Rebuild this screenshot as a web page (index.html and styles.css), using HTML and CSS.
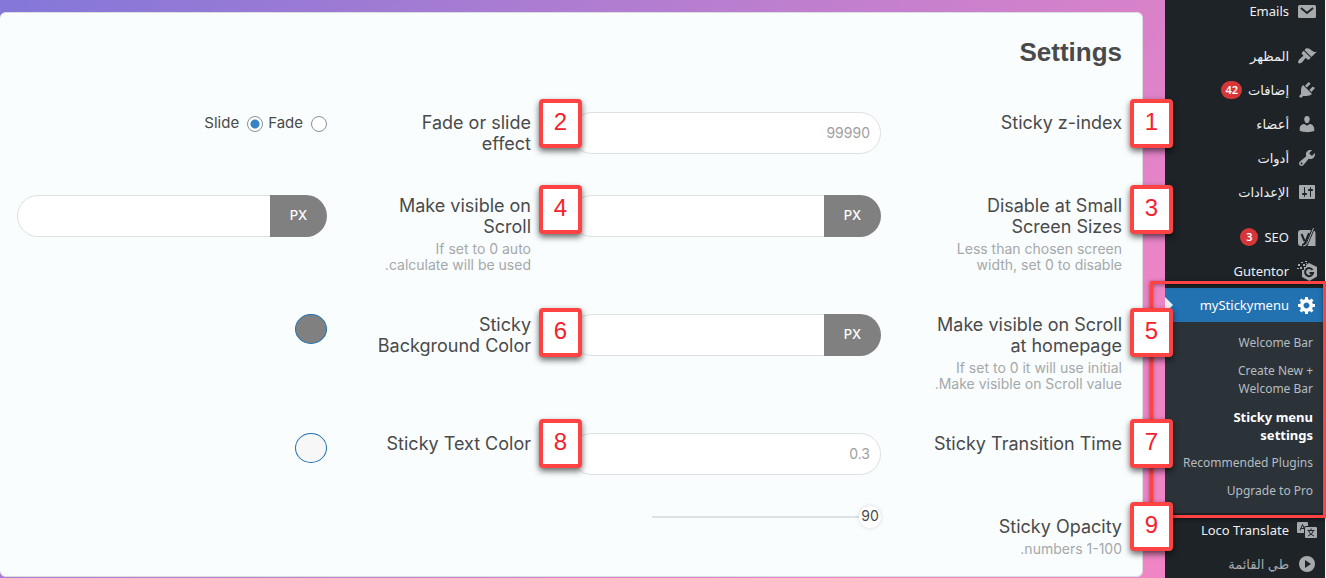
FILE: index.html
```
<!DOCTYPE html>
<html lang="ar" dir="rtl">
<head>
  <meta charset="UTF-8" />
  <title>myStickymenu</title>
  <link rel="stylesheet" href="styles.css">
</head>
<body>

<div class="page">

  <nav class="sidebar">
    <ul class="menu">
      <li>
        <a class="menu-link" href="#">
          <svg class="icon" viewBox="0 0 20 20"><rect x="1" y="4" width="18" height="13" rx="1.5"/><path class="cut" d="M4 7l6 5 6-5"/></svg>
          Emails
        </a>
      </li>
      <li class="separator"></li>
      <li>
        <a class="menu-link" href="#">
          <svg class="icon" viewBox="0 0 20 20"><path d="M14.48 11.06L7.41 3.99l1.5-1.5c.5-.56 2.3-.47 3.51.32 1.21.8 1.43 1.28 2.91 2.1 1.18.64 2.45 1.26 4.45.85zm-.71.71L6.7 4.7 4.93 6.47c-.39.39-.39 1.02 0 1.41l1.06 1.06c.39.39.39 1.03 0 1.42-.6.6-1.43 1.11-2.21 1.69-.35.26-.7.53-1.01.84C1.43 14.23.4 16.08 1.4 17.07c.99 1 2.84-.03 4.18-1.36.31-.31.58-.66.85-1.02.57-.78 1.08-1.61 1.69-2.21.39-.39 1.02-.39 1.41 0l1.06 1.06c.39.39 1.02.39 1.41 0z"/></svg>
          المظهر
        </a>
      </li>
      <li>
        <a class="menu-link" href="#">
          <svg class="icon" viewBox="0 0 20 20"><path d="M13.11 4.36L9.87 7.6 8 5.73l3.24-3.24c.35-.34 1.05-.2 1.56.32.52.51.66 1.21.31 1.55zm-8 1.77l.91-1.12 9.01 9.01-1.19.84c-.71.71-2.63 1.16-3.82 1.16H6.14L4.9 17.26c-.59.59-1.54.59-2.12 0-.59-.58-.59-1.53 0-2.12l1.24-1.24v-3.88c0-1.13.4-3.19 1.09-3.89zm7.26 3.97l3.24-3.24c.34-.35 1.04-.21 1.55.31.52.51.66 1.21.31 1.55l-3.24 3.25z"/></svg>
          إضافات <span class="count">42</span>
        </a>
      </li>
      <li>
        <a class="menu-link" href="#">
          <svg class="icon" viewBox="0 0 20 20"><path d="M10 9.25c-2.27 0-2.73-3.44-2.73-3.44C7 4.02 7.82 2 9.97 2c2.16 0 2.98 2.02 2.71 3.81 0 0-.41 3.44-2.68 3.44zm0 2.57L12.72 10c2.39 0 4.52 2.33 4.52 4.53v2.49s-3.65 1.13-7.24 1.13c-3.65 0-7.24-1.13-7.24-1.13v-2.49c0-2.25 1.94-4.48 4.47-4.48z"/></svg>
          أعضاء
        </a>
      </li>
      <li>
        <a class="menu-link" href="#">
          <svg class="icon" viewBox="0 0 20 20"><path d="M16.68 9.77c-1.34 1.34-3.3 1.67-4.95.99l-5.41 6.52c-.99.99-2.59.99-3.58 0s-.99-2.59 0-3.57l6.52-5.42c-.68-1.65-.35-3.61.99-4.95 1.28-1.28 3.12-1.62 4.72-1.06l-2.89 2.89 2.82 2.82 2.86-2.87c.53 1.58.18 3.39-1.08 4.65zM3.81 16.21c.4.39 1.04.39 1.43 0 .4-.4.4-1.04 0-1.43-.39-.4-1.03-.4-1.43 0-.39.39-.39 1.03 0 1.43z"/></svg>
          أدوات
        </a>
      </li>
      <li>
        <a class="menu-link" href="#">
          <svg class="icon" viewBox="0 0 20 20"><path d="M18 16V4c0-.55-.45-1-1-1H3c-.55 0-1 .45-1 1v12c0 .55.45 1 1 1h14c.55 0 1-.45 1-1zM8 11h1c.55 0 1 .45 1 1s-.45 1-1 1H8v1.5c0 .28-.22.5-.5.5s-.5-.22-.5-.5V13H6c-.55 0-1-.45-1-1s.45-1 1-1h1V5.5c0-.28.22-.5.5-.5s.5.22.5.5V11zm5-2h-1c-.55 0-1-.45-1-1s.45-1 1-1h1V5.5c0-.28.22-.5.5-.5s.5.22.5.5V7h1c.55 0 1 .45 1 1s-.45 1-1 1h-1v5.5c0 .28-.22.5-.5.5s-.5-.22-.5-.5V9z"/></svg>
          الإعدادات
        </a>
      </li>
      <li class="separator"></li>
      <li>
        <a class="menu-link" href="#">
          <svg class="icon" viewBox="0 0 20 20"><path d="M4 3h10l-6 16H4a3 3 0 0 1-3-3V6a3 3 0 0 1 3-3zM17 3.500a3 3 0 0 1 1.500 2.500v13h-8z"/><path class="cut" d="M4.500 7l3 7M12 6L8 16q-1 2-3 2"/><path class="line thin" d="M16.500 1L10.500 16q-1.500 3-4 3"/></svg>
          SEO <span class="count">3</span>
        </a>
      </li>
      <li>
        <a class="menu-link" href="#">
          <svg class="icon" viewBox="0 0 20 20"><path d="M12 2l8 4v9.500L12.500 20 5 16V9h2V6h2V4zM1 3h2v2H1zM4 1h2v1H4zM6 3h2v2H6zM3 6h2v2H3zM0 7h2v1H0zM8 0h2v1H8zM9 2h1v1H9z"/><path class="cut" d="M15.500 9a4 4 0 1 0 .5 3h-3.500"/></svg>
          Gutentor
        </a>
      </li>
      <li class="current">
        <a class="menu-link" href="#">
          <svg class="icon" viewBox="0 0 20 20"><path d="M18 12h-2.180c-.17.7-.44 1.350-.81 1.930l1.540 1.540-2.100 2.100-1.540-1.540c-.58.36-1.230.63-1.910.79V19H8v-2.180c-.68-.16-1.330-.43-1.910-.79l-1.540 1.540-2.120-2.120 1.540-1.540c-.36-.58-.63-1.230-.79-1.910H1V9.030h2.170c.16-.7.44-1.350.8-1.940L2.430 5.550l2.100-2.100 1.540 1.540c.58-.37 1.240-.64 1.930-.81V2h3v2.180c.68.16 1.330.43 1.910.79l1.540-1.540 2.120 2.120-1.540 1.540c.36.59.64 1.240.8 1.940H18V12zm-8.500 1.500c1.660 0 3-1.340 3-3s-1.340-3-3-3-3 1.340-3 3 1.340 3 3 3z"/></svg>
          myStickymenu
        </a>
        <ul class="submenu">
          <li><a href="#">Welcome Bar</a></li>
          <li><a href="#">+ Create New<br>Welcome Bar</a></li>
          <li><a class="active" href="#">Sticky menu settings</a></li>
          <li><a href="#">Recommended Plugins</a></li>
          <li><a href="#">Upgrade to Pro</a></li>
        </ul>
        <div class="outline"></div>
      </li>
      <li>
        <a class="menu-link" href="#">
          <svg class="icon" viewBox="0 0 20 20"><path d="M1 2h9a1 1 0 0 1 1 1v3H9a2 2 0 0 0-2 2v5H1a1 1 0 0 1-1-1V3a1 1 0 0 1 1-1z"/><path class="cut thin" d="M3 10.500L5.500 4.500l1.500 3.500M4 8.500h3"/><rect x="8" y="7" width="12" height="11" rx="1"/><path class="cut thin" d="M14 8.500v2M10.500 10.500h7M16.500 10.500q-1 4-5.500 5.500M11.500 10.500q1 4 5.500 5.500"/></svg>
          Loco Translate
        </a>
      </li>
      <li>
        <button class="menu-link collapse" type="button">
          <svg class="icon" viewBox="0 0 20 20"><circle cx="10" cy="10" r="8"/><path class="cut-fill" d="M8 6l6 4-6 4z"/></svg>
          طي القائمة
        </button>
      </li>
    </ul>
  </nav>

  <main class="content">
    <form class="card">
      <h1>Settings</h1>

      <div class="settings">
        <div class="label-cell row-1">
          <label for="zindex">Sticky z-index</label>
          <span class="callout">1</span>
        </div>
        <div class="field"><input class="text-input" id="zindex" type="text" value="99990"></div>
        <div class="label-cell row-1">
          <span class="label" id="effect">Fade or slide effect</span>
          <span class="callout">2</span>
        </div>
        <div class="radios" role="radiogroup" aria-labelledby="effect">
          <input type="radio" name="effect" id="fade"><label for="fade">Fade</label>
          <input type="radio" name="effect" id="slide" checked><label for="slide">Slide</label>
        </div>

        <div class="label-cell row-2">
          <label for="small">Disable at Small Screen Sizes</label>
          <p>Less than chosen screen width, set 0 to disable</p>
          <span class="callout">3</span>
        </div>
        <div class="field px"><span class="unit">PX</span><input class="text-input" id="small" type="text"></div>
        <div class="label-cell row-2">
          <label for="scroll">Make visible on Scroll</label>
          <p>If set to 0 auto calculate will be used.</p>
          <span class="callout">4</span>
        </div>
        <div class="field px"><span class="unit">PX</span><input class="text-input" id="scroll" type="text"></div>

        <div class="label-cell row-3">
          <label for="home">Make visible on Scroll at homepage</label>
          <p>If set to 0 it will use initial Make visible on Scroll value.</p>
          <span class="callout">5</span>
        </div>
        <div class="field px"><span class="unit">PX</span><input class="text-input" id="home" type="text"></div>
        <div class="label-cell row-3">
          <label for="bg">Sticky Background Color</label>
          <span class="callout">6</span>
        </div>
        <div><button class="swatch gray" id="bg" type="button"></button></div>

        <div class="label-cell row-4">
          <label for="time">Sticky Transition Time</label>
          <span class="callout">7</span>
        </div>
        <div class="field"><input class="text-input" id="time" type="text" value="0.3"></div>
        <div class="label-cell row-4">
          <label for="color">Sticky Text Color</label>
          <span class="callout">8</span>
        </div>
        <div><button class="swatch light" id="color" type="button"></button></div>

        <div class="label-cell row-4">
          <label for="opacity">Sticky Opacity</label>
          <p>numbers 1-100.</p>
          <span class="callout">9</span>
        </div>
        <div class="slider">
          <input id="opacity" type="range" min="90" max="100" value="90">
          <output for="opacity">90</output>
        </div>
      </div>
    </form>
  </main>

</div>

</body>
</html>
```
FILE: styles.css
```
* {
  box-sizing: border-box;
}
body {
  margin: 0;
  overflow: hidden;
  font-family: Inter, "Liberation Sans", sans-serif;
  color: #4a4a4a;
}
.page {
  display: flex;
  height: 100vh;
}

/* admin menu */
.sidebar {
  flex: none;
  width: 161px;
  background: #1d2327;
  border-right: 1px solid #f0f0f1;
  font-family: "Noto Sans", "DejaVu Sans", sans-serif;
}
.menu, .submenu {
  list-style: none;
  margin: 0;
  padding: 0;
}
.menu {
  margin-top: -6px;
}
.separator {
  height: 11px;
}
.menu-link {
  display: flex;
  align-items: center;
  width: 100%;
  height: 34px;
  padding: 0 8px;
  color: #f0f0f1;
  font-size: 13px;
  text-decoration: none;
}
.collapse {
  background: none;
  border: 0;
  color: #a7aaad;
  font-family: inherit;
}
.icon {
  width: 20px;
  height: 20px;
  margin-left: 8px;
  fill: #a7aaad;
}
.icon .cut {
  fill: none;
  stroke: #1d2327;
  stroke-width: 2;
}
.icon .cut-fill {
  fill: #1d2327;
}
.icon .line {
  fill: none;
  stroke: #a7aaad;
  stroke-width: 2;
}
.icon .thin {
  stroke-width: 1;
}
.count {
  min-width: 18px;
  height: 18px;
  margin-right: 6px;
  padding: 0 4px;
  border-radius: 9px;
  background: #d63638;
  color: #fff;
  font-size: 11px;
  font-weight: 600;
  line-height: 18px;
  text-align: center;
}
.current {
  position: relative;
}
.current > .menu-link {
  background: #2271b1;
  color: #fff;
}
.current > .menu-link .icon {
  fill: #fff;
}
.current::after {
  content: "";
  position: absolute;
  left: 0;
  top: 9px;
  border: 8px solid transparent;
  border-left-color: #f0f0f1;
  border-right: 0;
}
.submenu {
  padding: 7px 0 8px;
  background: #2c3338;
}
.submenu a {
  display: block;
  padding: 5px 12px 5px 14px;
  color: #b5bcc2;
  font-size: 12px;
  line-height: 18px;
  text-decoration: none;
}
.submenu .active {
  color: #fff;
  font-size: 13px;
  font-weight: 700;
}
.outline {
  position: absolute;
  z-index: 2;
  top: -7px;
  right: -1px;
  bottom: -5px;
  left: -15px;
  border: 3px solid #ff4242;
  box-shadow: 0 1px 4px rgba(0,0,0,0.5), inset 0 1px 4px rgba(0,0,0,0.4);
}

/* settings panel */
.content {
  flex: 1;
  min-width: 0;
  padding: 12px 22px 0 0;
  background: linear-gradient(135deg, #8377d9, #d081cb 60%, #ef85c5 85%);
}
.card {
  height: calc(100% - 1px);
  padding: 24px 20px 0 17px;
  background: #f9fdfe;
  border: 1px solid #dcdfe2;
  border-left: 0;
  border-radius: 6px;
}
h1 {
  margin: 0;
  font: bold 26px/30px "Liberation Sans", Arial, sans-serif;
}
.settings {
  display: grid;
  grid-template-columns: 201fr 310fr 164fr 310fr;
  gap: 41px 40px;
  margin-top: 45px;
}
.label-cell {
  position: relative;
  padding-left: 8px;
  font-size: 18px;
  line-height: 21px;
}
.label-cell label, .label {
  display: block;
}
.label-cell p {
  margin: 4px 0 0;
  color: #a5a8aa;
  font-size: 14px;
  line-height: 16px;
}
.field {
  display: flex;
  height: 42px;
}
.text-input {
  flex: 1;
  min-width: 0;
  padding: 0 10px 2px;
  background: #fff;
  border: 1px solid #dce1e2;
  border-radius: 21px;
  color: #a0a0a0;
  font: 14px Inter, sans-serif;
}
.px .text-input {
  border-radius: 21px 0 0 21px;
  border-right: 0;
}
.unit {
  width: 57px;
  border-radius: 0 21px 21px 0;
  background: #808080;
  color: #fff;
  font-size: 13px;
  font-weight: 500;
  line-height: 40px;
  text-align: center;
}
.radios {
  display: flex;
  align-items: center;
  height: 24px;
  font-size: 15px;
  line-height: 20px;
}
.radios input {
  appearance: none;
  width: 16px;
  height: 16px;
  margin: 0 0 0 8px;
  border: 1px solid #8c8f94;
  border-radius: 50%;
  background: #fff;
}
.radios input:checked {
  background: radial-gradient(circle, #3582c4 4px, #fff 5px);
}
.radios label {
  margin-left: 5px;
  padding-bottom: 2px;
}
.swatch {
  display: block;
  width: 32px;
  height: 30px;
  border: 1px solid #2271b1;
  border-radius: 50%;
}
.gray {
  background: #808080;
}
.light {
  background: #f7f7f7;
}
.slider {
  position: relative;
  width: 74%;
}
.slider input {
  appearance: none;
  display: block;
  width: 100%;
  height: 2px;
  margin: 0;
  background: #dce1e2;
}
.slider input::-webkit-slider-thumb {
  appearance: none;
  width: 22px;
  height: 22px;
  border-radius: 50%;
  background: #fff;
  box-shadow: 0 0 4px rgba(0,0,0,0.15);
}
.slider output {
  position: absolute;
  top: -10px;
  right: 0;
  width: 22px;
  font-size: 14px;
  line-height: 20px;
  text-align: center;
}

/* numbered marks */
.callout {
  position: absolute;
  z-index: 3;
  right: -51px;
  width: 43px;
  height: 49px;
  border: 4px solid #ff4242;
  border-radius: 4px;
  background: #fff;
  box-shadow: 0 3px 6px rgba(0,0,0,0.6);
  color: #f5222d;
  font: 24px/38px "Liberation Sans", Arial, sans-serif;
  text-align: center;
}
.row-1 .callout {
  top: -13px;
}
.row-2 .callout {
  top: -10px;
}
.row-3 .callout {
  top: -6px;
}
.row-4 .callout {
  top: -14px;
}
```
